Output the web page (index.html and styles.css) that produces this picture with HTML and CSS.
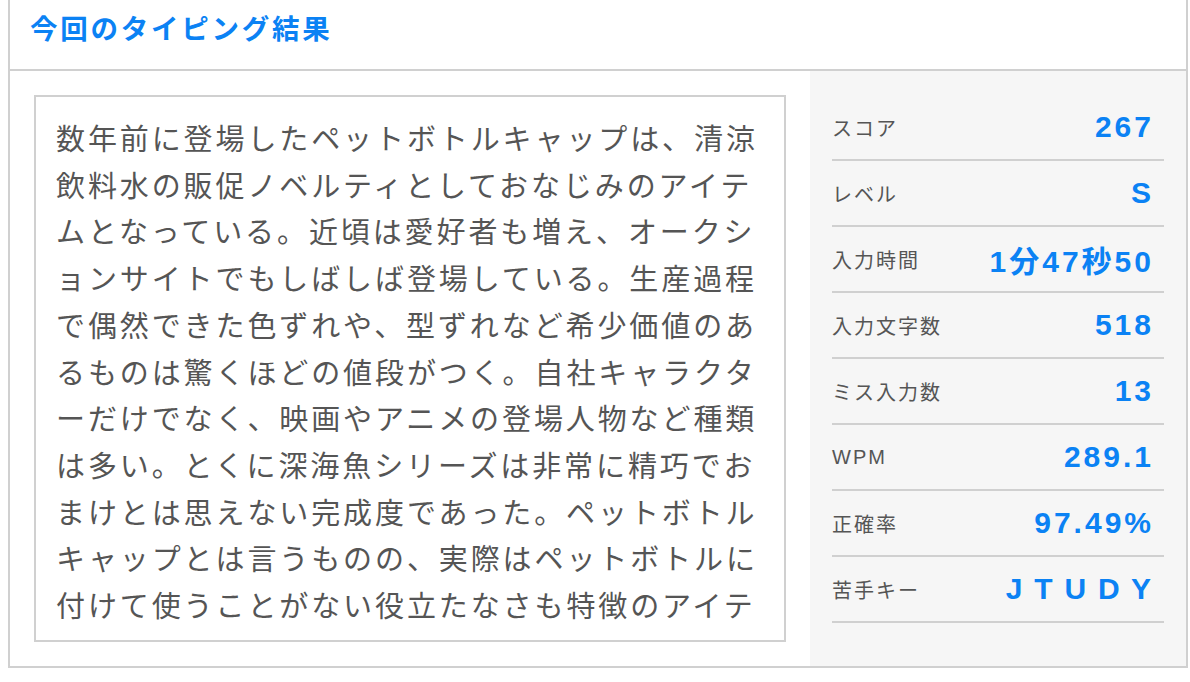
FILE: index.html
```html
<!DOCTYPE html>
<html lang="ja">
<head>
  <meta charset="UTF-8">
  <meta name="viewport" content="width=device-width, initial-scale=1.0">
  <title>タイピング結果</title>
  <link rel="stylesheet" href="styles.css">
</head>
<body>
<div class="result">
  <h2 class="result-title">今回のタイピング結果</h2>
  <div class="result-body">
    <div class="result-text-wrap">
      <p class="result-text">数年前に登場したペットボトルキャップは、清涼飲料水の販促ノベルティとしておなじみのアイテムとなっている。近頃は愛好者も増え、オークションサイトでもしばしば登場している。生産過程で偶然できた色ずれや、型ずれなど希少価値のあるものは驚くほどの値段がつく。自社キャラクターだけでなく、映画やアニメの登場人物など種類は多い。とくに深海魚シリーズは非常に精巧でおまけとは思えない完成度であった。ペットボトルキャップとは言うものの、実際はペットボトルに付けて使うことがない役立たなさも特徴のアイテムである。</p>
    </div>
    <dl class="result-stats">
      <div class="stat"><dt>スコア</dt><dd>267</dd></div>
      <div class="stat"><dt>レベル</dt><dd>S</dd></div>
      <div class="stat"><dt>入力時間</dt><dd>1分47秒50</dd></div>
      <div class="stat"><dt>入力文字数</dt><dd>518</dd></div>
      <div class="stat"><dt>ミス入力数</dt><dd>13</dd></div>
      <div class="stat"><dt>WPM</dt><dd>289.1</dd></div>
      <div class="stat"><dt>正確率</dt><dd>97.49%</dd></div>
      <div class="stat"><dt>苦手キー</dt><dd class="keys">J T U D Y</dd></div>
    </dl>
  </div>
</div>
</body>
</html>
```

FILE: styles.css
```css
* {
  margin: 0;
  padding: 0;
  box-sizing: border-box;
}

body {
  margin: 0 2px 0 8px;
  background: #fff;
  font-family: 'Liberation Sans', 'Noto Sans CJK JP', sans-serif;
  color: #555;
}

.result {
  border: 2px solid #d0d0d0;
  border-top: none;
}

.result-title {
  padding: 0 20px 9px;
  line-height: 60px;
  font-size: 27.5px;
  font-weight: 700;
  letter-spacing: 0.1em;
  color: #0b82f4;
  border-bottom: 2px solid #d0d0d0;
}

.result-body {
  display: flex;
}

.result-text-wrap {
  flex: 1;
  padding: 24px;
}

.result-text {
  height: 547px;
  padding: 20px;
  border: 2px solid #d0d0d0;
  overflow: hidden;
  font-size: 29px;
  line-height: 46.7px;
  letter-spacing: 0.1em;
  line-break: anywhere;
  color: #555;
}

.result-stats {
  flex: none;
  width: 376px;
  padding: 24px 22px;
  background: #f6f6f6;
}

.stat {
  display: flex;
  align-items: center;
  justify-content: space-between;
  height: 66px;
  border-bottom: 2px solid #d0d0d0;
}

.stat dt {
  font-size: 20px;
  letter-spacing: 0.1em;
  color: #555;
}

.stat dd {
  padding-right: 10px;
  font-size: 30px;
  font-weight: 700;
  letter-spacing: 0.1em;
  color: #0b82f4;
}

.stat .keys {
  word-spacing: -2.5px;
}
```
